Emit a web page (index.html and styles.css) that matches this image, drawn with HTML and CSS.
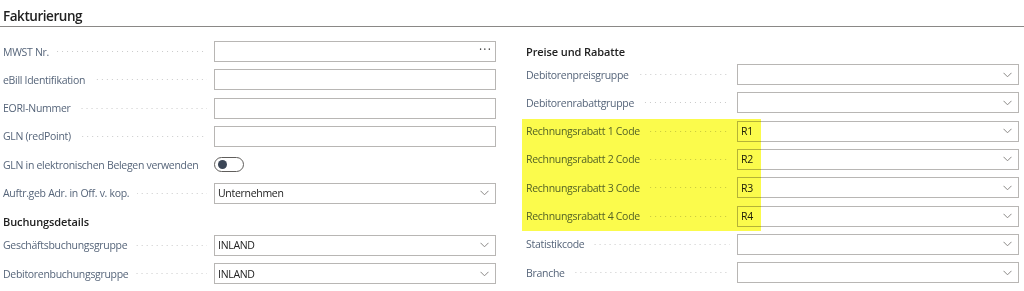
FILE: index.html
```html
<!DOCTYPE html>
<html lang="de">
<head>
    <meta charset="UTF-8">
    <meta name="viewport" content="width=device-width, initial-scale=1.0">
    <title>Fakturierung</title>
    <link rel="stylesheet" href="styles.css">
</head>
<body>
    <div class="section-title">Fakturierung</div>

    <div class="columns">
        <!-- linke Spalte -->
        <div class="column">
            <div class="row">
                <div class="caption"><span class="lbl">MWST Nr.</span><span class="dots"></span></div>
                <div class="field">
                    <span class="value"></span>
                    <span class="more">···</span>
                </div>
            </div>
            <div class="row">
                <div class="caption"><span class="lbl">eBill Identifikation</span><span class="dots"></span></div>
                <div class="field"><span class="value"></span></div>
            </div>
            <div class="row">
                <div class="caption"><span class="lbl">EORI-Nummer</span><span class="dots"></span></div>
                <div class="field"><span class="value"></span></div>
            </div>
            <div class="row">
                <div class="caption"><span class="lbl">GLN (redPoint)</span><span class="dots"></span></div>
                <div class="field"><span class="value"></span></div>
            </div>
            <div class="row">
                <div class="caption"><span class="lbl">GLN in elektronischen Belegen verwenden</span><span class="dots"></span></div>
                <div class="toggle"><span class="knob"></span></div>
            </div>
            <div class="row">
                <div class="caption"><span class="lbl">Auftr.geb Adr. in Off. v. kop.</span><span class="dots"></span></div>
                <div class="field select">
                    <span class="value">Unternehmen</span>
                    <svg class="chevron" width="9" height="6" viewBox="0 0 9 6"><path d="M0.5 0.8L4.5 4.8L8.5 0.8" fill="none" stroke="#8a8886" stroke-width="1"/></svg>
                </div>
            </div>

            <div class="group-title">Buchungsdetails</div>
            <div class="row">
                <div class="caption"><span class="lbl">Geschäftsbuchungsgruppe</span><span class="dots"></span></div>
                <div class="field select">
                    <span class="value">INLAND</span>
                    <svg class="chevron" width="9" height="6" viewBox="0 0 9 6"><path d="M0.5 0.8L4.5 4.8L8.5 0.8" fill="none" stroke="#8a8886" stroke-width="1"/></svg>
                </div>
            </div>
            <div class="row">
                <div class="caption"><span class="lbl">Debitorenbuchungsgruppe</span><span class="dots"></span></div>
                <div class="field select">
                    <span class="value">INLAND</span>
                    <svg class="chevron" width="9" height="6" viewBox="0 0 9 6"><path d="M0.5 0.8L4.5 4.8L8.5 0.8" fill="none" stroke="#8a8886" stroke-width="1"/></svg>
                </div>
            </div>
        </div>

        <!-- rechte Spalte -->
        <div class="column">
            <div class="group-title first">Preise und Rabatte</div>
            <div class="row">
                <div class="caption"><span class="lbl">Debitorenpreisgruppe</span><span class="dots"></span></div>
                <div class="field select">
                    <span class="value"></span>
                    <svg class="chevron" width="9" height="6" viewBox="0 0 9 6"><path d="M0.5 0.8L4.5 4.8L8.5 0.8" fill="none" stroke="#8a8886" stroke-width="1"/></svg>
                </div>
            </div>
            <div class="row">
                <div class="caption"><span class="lbl">Debitorenrabattgruppe</span><span class="dots"></span></div>
                <div class="field select">
                    <span class="value"></span>
                    <svg class="chevron" width="9" height="6" viewBox="0 0 9 6"><path d="M0.5 0.8L4.5 4.8L8.5 0.8" fill="none" stroke="#8a8886" stroke-width="1"/></svg>
                </div>
            </div>

            <!-- markierte Felder -->
            <div class="marked">
                <div class="row">
                    <div class="caption"><span class="lbl">Rechnungsrabatt 1 Code</span><span class="dots"></span></div>
                    <div class="field select">
                        <span class="value">R1</span>
                        <svg class="chevron" width="9" height="6" viewBox="0 0 9 6"><path d="M0.5 0.8L4.5 4.8L8.5 0.8" fill="none" stroke="#8a8886" stroke-width="1"/></svg>
                    </div>
                </div>
                <div class="row">
                    <div class="caption"><span class="lbl">Rechnungsrabatt 2 Code</span><span class="dots"></span></div>
                    <div class="field select">
                        <span class="value">R2</span>
                        <svg class="chevron" width="9" height="6" viewBox="0 0 9 6"><path d="M0.5 0.8L4.5 4.8L8.5 0.8" fill="none" stroke="#8a8886" stroke-width="1"/></svg>
                    </div>
                </div>
                <div class="row">
                    <div class="caption"><span class="lbl">Rechnungsrabatt 3 Code</span><span class="dots"></span></div>
                    <div class="field select">
                        <span class="value">R3</span>
                        <svg class="chevron" width="9" height="6" viewBox="0 0 9 6"><path d="M0.5 0.8L4.5 4.8L8.5 0.8" fill="none" stroke="#8a8886" stroke-width="1"/></svg>
                    </div>
                </div>
                <div class="row">
                    <div class="caption"><span class="lbl">Rechnungsrabatt 4 Code</span><span class="dots"></span></div>
                    <div class="field select">
                        <span class="value">R4</span>
                        <svg class="chevron" width="9" height="6" viewBox="0 0 9 6"><path d="M0.5 0.8L4.5 4.8L8.5 0.8" fill="none" stroke="#8a8886" stroke-width="1"/></svg>
                    </div>
                </div>
            </div>

            <div class="row">
                <div class="caption"><span class="lbl">Statistikcode</span><span class="dots"></span></div>
                <div class="field select">
                    <span class="value"></span>
                    <svg class="chevron" width="9" height="6" viewBox="0 0 9 6"><path d="M0.5 0.8L4.5 4.8L8.5 0.8" fill="none" stroke="#8a8886" stroke-width="1"/></svg>
                </div>
            </div>
            <div class="row">
                <div class="caption"><span class="lbl">Branche</span><span class="dots"></span></div>
                <div class="field select">
                    <span class="value"></span>
                    <svg class="chevron" width="9" height="6" viewBox="0 0 9 6"><path d="M0.5 0.8L4.5 4.8L8.5 0.8" fill="none" stroke="#8a8886" stroke-width="1"/></svg>
                </div>
            </div>
        </div>
    </div>
</body>
</html>
```

FILE: styles.css
```css
body {
    font-family: "Open Sans", "Noto Sans", Arial, sans-serif;
    margin: 0;
    padding: 0;
    background-color: #fff;
    color: #212121;
    overflow: hidden;
}

.section-title {
    height: 26px;
    padding-left: 3px;
    font-size: 13.5px;
    font-weight: 600;
    line-height: 33px;
    letter-spacing: -0.45px;
    border-bottom: 1px solid #8a8886;
}

.columns {
    display: grid;
    grid-template-columns: 493px 494px;
    column-gap: 30px;
    padding: 14px 0 0 3px;
}

.row {
    display: flex;
    align-items: center;
    height: 21px;
    margin-bottom: 7.33px;
}

.caption {
    width: 211px;
    flex-shrink: 0;
    display: flex;
    align-items: center;
    padding-right: 7px;
    box-sizing: border-box;
}

.lbl {
    font-size: 10.5px;
    color: #56657a;
    white-space: nowrap;
    letter-spacing: -0.3px;
}

.dots {
    flex: 1;
    height: 1px;
    margin-left: 8px;
    background-image: linear-gradient(to right, #cacaca 1px, transparent 1px);
    background-size: 5px 1px;
    background-position: right;
}

.field {
    width: 282px;
    height: 21px;
    box-sizing: border-box;
    border: 1px solid #b8b6b4;
    display: flex;
    align-items: center;
    padding: 0 6px 0 3px;
    background-color: #fff;
}

.value {
    flex: 1;
    font-size: 10.5px;
    color: #212121;
    letter-spacing: -0.3px;
}

.more {
    font-size: 12px;
    color: #444;
    letter-spacing: 1.2px;
    line-height: 1;
    padding-bottom: 3px;
    margin-right: -3px;
}

.chevron {
    flex-shrink: 0;
}

.toggle {
    width: 30px;
    height: 15px;
    box-sizing: border-box;
    border: 1px solid #605e5c;
    border-radius: 8px;
    display: flex;
    align-items: center;
    padding-left: 3px;
}

.knob {
    width: 9px;
    height: 9px;
    border-radius: 50%;
    background-color: #3b4657;
}

.group-title {
    height: 24px;
    font-size: 11px;
    font-weight: 600;
    line-height: 21px;
    color: #212121;
    letter-spacing: -0.1px;
}

.group-title.first {
    height: 23px;
}

.marked {
    position: relative;
}

/* gelbe Markierung ueber den Rabattcodes */
.marked::after {
    content: "";
    position: absolute;
    top: -2px;
    left: -4px;
    width: 239px;
    height: 112px;
    background-color: #fbfb4c;
    mix-blend-mode: multiply;
    pointer-events: none;
}
```
